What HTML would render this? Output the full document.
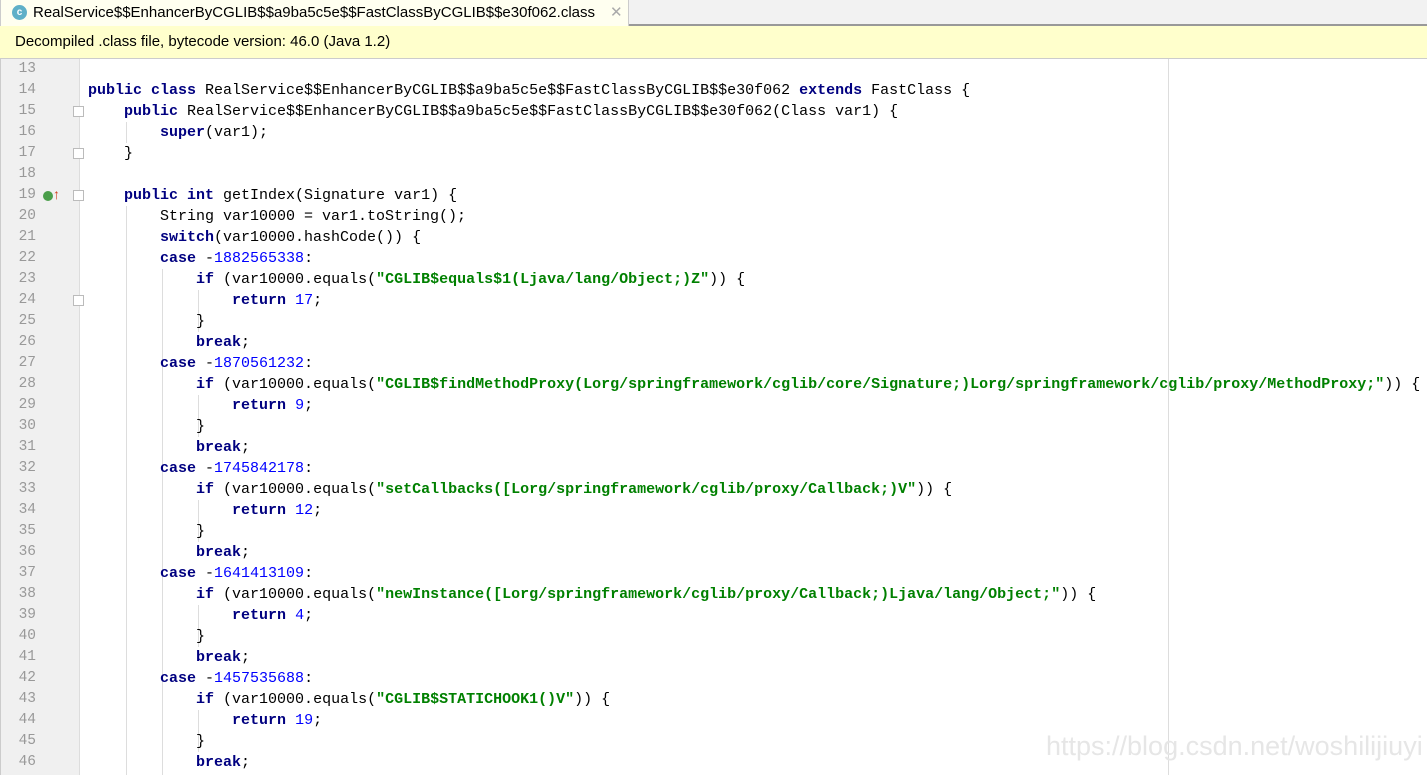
<!DOCTYPE html>
<html><head><meta charset="utf-8"><style>
*{margin:0;padding:0;box-sizing:border-box}
body{width:1427px;height:775px;overflow:hidden;background:#fff;font-family:"Liberation Sans",sans-serif;position:relative}
.tabbar{position:absolute;left:0;top:0;width:1427px;height:26px;background:#f2f2f2;border-bottom:2px solid #999}
.tab{position:absolute;left:0;top:0;width:629px;height:26px;background:#fffff0;border-right:1px solid #ccc;border-left:1px solid #ccc}
.tab .ic{position:absolute;left:11px;top:5px;width:15px;height:15px;border-radius:50%;background:#5fb0c8;color:#fff;font-size:10px;font-weight:bold;text-align:center;line-height:15px}
.tab .t{position:absolute;left:32px;top:4px;font-size:15px;color:#000}
.tab .x{position:absolute;left:609px;top:3px;font-size:15px;color:#aaa}
.info{position:absolute;left:0;top:26px;width:1427px;height:33px;background:#ffffcc;border-bottom:1px solid #ccc;font-size:15px;line-height:32px;padding-left:15px;color:#000}
.gutter{position:absolute;left:0;top:59px;width:80px;height:716px;background:#f0f0f0;border-left:1px solid #ccc;border-right:1px solid #ddd}
.margin{position:absolute;left:1168px;top:59px;width:1px;height:716px;background:#ddd}
.ln{position:absolute;left:0;width:36px;text-align:right;font-family:"Liberation Mono",monospace;font-size:14.5px;color:#999;line-height:21px}
.code{position:absolute;left:88px;font-family:"Liberation Mono",monospace;font-size:15px;line-height:21px;white-space:pre;color:#000}
.k{color:#000080;font-weight:bold}.n{color:#0000ff}.s{color:#008000;font-weight:bold}
.g{position:absolute;width:1px;background:#ddd}
.fold{position:absolute;left:73px;width:11px;height:11px;border:1px solid #bbb;background:#fff}
.wm{position:absolute;left:1046px;top:731px;font-size:27px;color:#e6e6e6;letter-spacing:0px}
</style></head><body>
<div class="tabbar"><div class="tab"><div class="ic">c</div><div class="t">RealService$$EnhancerByCGLIB$$a9ba5c5e$$FastClassByCGLIB$$e30f062.class</div><div class="x">✕</div></div></div>
<div class="info">Decompiled .class file, bytecode version: 46.0 (Java 1.2)</div>
<div class="gutter"></div>
<div class="margin"></div>
<div class="g" style="left:126px;top:122px;height:21px"></div>
<div class="g" style="left:126px;top:206px;height:569px"></div>
<div class="g" style="left:162px;top:269px;height:506px"></div>
<div class="g" style="left:198px;top:290px;height:42px"></div>
<div class="g" style="left:198px;top:395px;height:42px"></div>
<div class="g" style="left:198px;top:500px;height:42px"></div>
<div class="g" style="left:198px;top:605px;height:42px"></div>
<div class="g" style="left:198px;top:710px;height:42px"></div>
<div class="fold" style="top:106px"></div>
<div class="fold" style="top:148px"></div>
<div class="fold" style="top:190px"></div>
<div class="fold" style="top:295px"></div>
<div style="position:absolute;left:43px;top:191px;width:10px;height:10px;border-radius:50%;background:#4a9e4a"></div>
<div style="position:absolute;left:53px;top:186px;color:#d04020;font-size:14px;font-weight:bold">↑</div>
<div class="ln" style="top:59px">13<br>14<br>15<br>16<br>17<br>18<br>19<br>20<br>21<br>22<br>23<br>24<br>25<br>26<br>27<br>28<br>29<br>30<br>31<br>32<br>33<br>34<br>35<br>36<br>37<br>38<br>39<br>40<br>41<br>42<br>43<br>44<br>45<br>46</div>
<div class="code" style="top:59px">
<span class="k">public class</span> RealService$$EnhancerByCGLIB$$a9ba5c5e$$FastClassByCGLIB$$e30f062 <span class="k">extends</span> FastClass {
    <span class="k">public</span> RealService$$EnhancerByCGLIB$$a9ba5c5e$$FastClassByCGLIB$$e30f062(Class var1) {
        <span class="k">super</span>(var1);
    }

    <span class="k">public int</span> getIndex(Signature var1) {
        String var10000 = var1.toString();
        <span class="k">switch</span>(var10000.hashCode()) {
        <span class="k">case</span> -<span class="n">1882565338</span>:
            <span class="k">if</span> (var10000.equals(<span class="s">"CGLIB$equals$1(Ljava/lang/Object;)Z"</span>)) {
                <span class="k">return</span> <span class="n">17</span>;
            }
            <span class="k">break</span>;
        <span class="k">case</span> -<span class="n">1870561232</span>:
            <span class="k">if</span> (var10000.equals(<span class="s">"CGLIB$findMethodProxy(Lorg/springframework/cglib/core/Signature;)Lorg/springframework/cglib/proxy/MethodProxy;"</span>)) {
                <span class="k">return</span> <span class="n">9</span>;
            }
            <span class="k">break</span>;
        <span class="k">case</span> -<span class="n">1745842178</span>:
            <span class="k">if</span> (var10000.equals(<span class="s">"setCallbacks([Lorg/springframework/cglib/proxy/Callback;)V"</span>)) {
                <span class="k">return</span> <span class="n">12</span>;
            }
            <span class="k">break</span>;
        <span class="k">case</span> -<span class="n">1641413109</span>:
            <span class="k">if</span> (var10000.equals(<span class="s">"newInstance([Lorg/springframework/cglib/proxy/Callback;)Ljava/lang/Object;"</span>)) {
                <span class="k">return</span> <span class="n">4</span>;
            }
            <span class="k">break</span>;
        <span class="k">case</span> -<span class="n">1457535688</span>:
            <span class="k">if</span> (var10000.equals(<span class="s">"CGLIB$STATICHOOK1()V"</span>)) {
                <span class="k">return</span> <span class="n">19</span>;
            }
            <span class="k">break</span>;</div>
<div class="wm">https://blog.csdn.net/woshilijiuyi</div>
</body></html>
